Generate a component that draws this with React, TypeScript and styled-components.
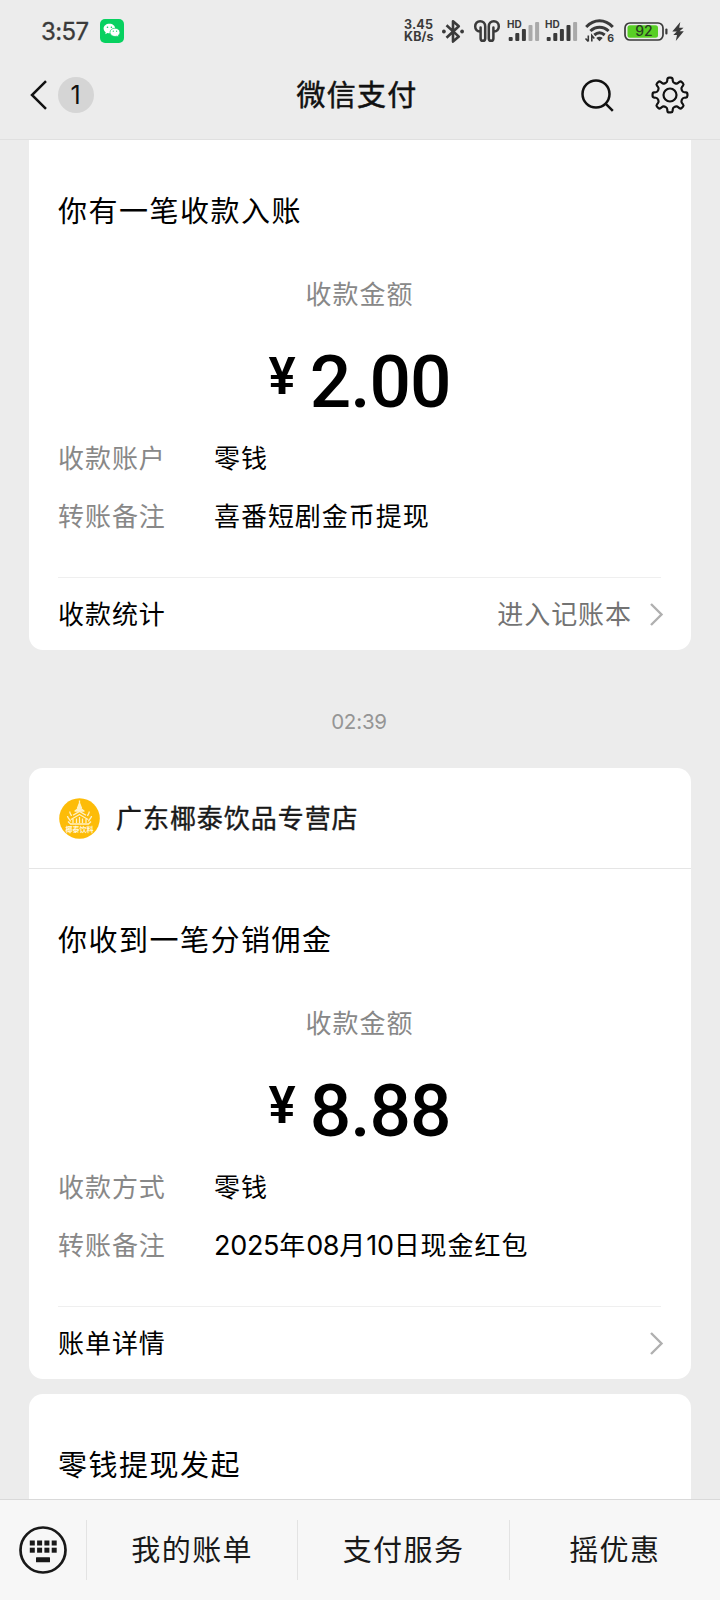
import React from "react";
import styled, { createGlobalStyle } from "styled-components";

const GlobalStyle = createGlobalStyle`
  * { box-sizing: border-box; }
  html, body { margin: 0; background: #ececec; }
  body { font-family: Inter, "Noto Sans CJK SC", sans-serif; color: #000; }
  svg { display: block; flex: none; overflow: visible; }
`;

const Screen = styled.div`
  width: 720px;
  height: 1600px;
  display: flex;
  flex-direction: column;
  overflow: hidden;
  background: #ececec;
`;

const StatusBar = styled.div`
  height: 62px;
  flex: none;
  display: flex;
  align-items: center;
  justify-content: space-between;
  padding: 0 36px 0 41px;
  color: #3a3a3a;
`;

const StatusGroup = styled.div`
  display: flex;
  align-items: center;
  gap: 12px;
`;

const StatusIcons = styled.div`
  display: grid;
  grid-template-columns: 38px 32px 33px 38px 40px 39px 48px 12px;
  align-items: center;
`;

const Clock = styled.span`
  width: 47px;
  white-space: nowrap;
  font-size: 24px;
  line-height: 30px;
  letter-spacing: -0.6px;
  padding-top: 1px;
  -webkit-text-stroke: 0.3px #3a3a3a;
`;

const NetSpeed = styled.div`
  display: flex;
  flex-direction: column;
  font-size: 12.5px;
  line-height: 12.4px;
  font-weight: 700;
  letter-spacing: 0.15px;
  white-space: nowrap;
`;

const NavBar = styled.header`
  height: 78px;
  flex: none;
  display: grid;
  grid-template-columns: 1fr auto 1fr;
  align-items: center;
  padding: 0 32px 11px 30px;
  border-bottom: 1px solid #e0e0e0;
`;

const NavSide = styled.div<{ $end?: boolean }>`
  display: flex;
  align-items: center;
  justify-content: ${(p) => (p.$end ? "flex-end" : "flex-start")};
  gap: ${(p) => (p.$end ? 38 : 11)}px;
`;

const UnreadBadge = styled.span`
  width: 36px;
  height: 36px;
  border-radius: 50%;
  background: #d5d5d5;
  display: flex;
  align-items: center;
  justify-content: center;
  padding-right: 1px;
  font-size: 25px;
  color: #111;
`;

const NavTitle = styled.h1`
  margin: 2px 0 0 -4px;
  font-size: 29px;
  line-height: 40px;
  letter-spacing: 1.3px;
  font-weight: 400;
  -webkit-text-stroke: 0.5px #111;
  color: #111;
`;

const Feed = styled.main`
  flex: 1;
  min-height: 0;
  overflow: hidden;
  padding: 0 29px;
`;

const Card = styled.section<{ $continued?: boolean; $gap?: number }>`
  background: #fff;
  border-radius: ${(p) => (p.$continued ? "0 0 14px 14px" : "14px")};
  margin-top: ${(p) => p.$gap ?? 0}px;
`;

const Merchant = styled.div`
  height: 101px;
  display: flex;
  align-items: center;
  gap: 16px;
  padding: 0 30px;
  border-bottom: 1px solid #e5e5e5;
`;

const MerchantName = styled.span`
  padding-top: 2px;
  font-size: 26px;
  line-height: 36px;
  letter-spacing: 0.95px;
  -webkit-text-stroke: 0.4px #191919;
  color: #191919;
`;

const Body = styled.div<{ $clipped?: boolean }>`
  padding: 52px 30px ${(p) => (p.$clipped ? 80 : 0)}px 29px;
`;

const Heading = styled.h2`
  margin: 0;
  font-size: 29px;
  line-height: 40px;
  letter-spacing: 1.5px;
  font-weight: 400;
`;

const AmountLabel = styled.div`
  margin-top: 45px;
  text-align: center;
  font-size: 26px;
  line-height: 36px;
  letter-spacing: 0.95px;
  color: #888;
`;

const Amount = styled.div`
  height: 114px;
  padding-top: 33px;
  display: flex;
  justify-content: center;
  align-items: flex-start;
  gap: 14px;
  font-family: Roboto, sans-serif;
  font-weight: 500;
`;

const Currency = styled.span`
  font-size: 51px;
  line-height: 61px;
  font-weight: 600;
`;

const Figure = styled.span`
  font-size: 73px;
  line-height: 72px;
  letter-spacing: -1px;
`;

const Details = styled.dl`
  margin: 0 0 34px;
`;

const DetailRow = styled.div`
  height: 58px;
  display: grid;
  grid-template-columns: 156px 1fr;
  align-items: center;
  font-size: 26px;
  letter-spacing: 0.95px;
`;

const DetailLabel = styled.dt`
  color: #888;
`;

const DetailValue = styled.dd`
  margin: 0;
`;

const Digits = styled.span`
  font-size: 27px;
  line-height: 1;
  letter-spacing: -0.3px;
`;

const FooterRow = styled.div`
  height: 73px;
  display: flex;
  align-items: center;
  border-top: 1px solid #efefef;
  font-size: 26px;
  letter-spacing: 0.95px;
`;

const FooterLabel = styled.span`
  padding-bottom: 4px;
`;

const FooterHint = styled.span`
  margin-left: auto;
  margin-right: 18px;
  padding-bottom: 4px;
  color: #737373;
`;

const ChevronSlot = styled.span<{ $push?: boolean }>`
  margin-left: ${(p) => (p.$push ? "auto" : "0")};
  margin-right: -2px;
`;

const Timestamp = styled.div`
  height: 118px;
  padding: 26px 2px 0 0;
  line-height: 92px;
  text-align: center;
  font-size: 20.5px;
  letter-spacing: -0.2px;
  color: #959595;
`;

const MenuBar = styled.nav`
  height: 101px;
  flex: none;
  display: flex;
  align-items: center;
  border-top: 1px solid #d9d9d9;
  background: #f7f7f7;
`;

const KeyboardButton = styled.div`
  width: 86px;
  flex: none;
  display: flex;
  padding-left: 19px;
`;

const MenuItem = styled.div`
  flex: 1;
  height: 60px;
  display: flex;
  align-items: center;
  justify-content: center;
  padding-bottom: 5px;
  border-left: 1px solid #e3e3e3;
  font-size: 29px;
  letter-spacing: 1.4px;
  color: #191919;
`;

const MessagesIcon = () => (
  <svg width="24" height="24" viewBox="0 0 24 24">
    <rect width="24" height="24" rx="5" fill="#07d160" />
    <path d="M9.4 4.8c-3.3 0-5.8 2.1-5.8 4.8 0 1.5.8 2.8 2.1 3.7l-.4 1.9 2.1-1.1c3.9 1 7.8-1 7.8-4.5 0-2.7-2.5-4.8-5.8-4.8z" fill="#fff" />
    <path d="M15 9.2c-2.9 0-5 1.8-5 4.1s2.1 4.2 5 4.2c.6 0 1.2-.1 1.8-.3l1.7.9-.4-1.5c1.1-.8 1.8-1.9 1.8-3.3 0-2.3-2.1-4.1-4.9-4.1z" fill="#fff" stroke="#07d160" strokeWidth=".7" />
    <g fill="#07d160">
      <circle cx="7.5" cy="8.2" r=".8" />
      <circle cx="11.4" cy="8.2" r=".8" />
      <circle cx="13.3" cy="12.2" r=".6" />
      <circle cx="16.6" cy="12.2" r=".6" />
    </g>
  </svg>
);

const BluetoothIcon = () => (
  <svg width="22" height="25" viewBox="0 0 22 25" fill="none" stroke="#3a3a3a" strokeWidth="2.6">
    <path d="M4.5 6.3 16.8 17.6 11 22.6V2.2l5.8 5L4.5 18.7" strokeLinejoin="round" />
    <circle cx="1.9" cy="12.5" r="1.9" fill="#3a3a3a" stroke="none" />
    <circle cx="20.1" cy="12.5" r="1.9" fill="#3a3a3a" stroke="none" />
  </svg>
);

const EarbudsIcon = () => (
  <svg width="26" height="22" viewBox="0 0 26 22" fill="none" stroke="#3a3a3a" strokeWidth="2.5" strokeLinejoin="round" strokeLinecap="round">
    <path d="M6.6 11.4C3 11.8 1.2 9.2 1.2 6.4 1.2 3.3 3.3 1.2 6.2 1.2s5 2 5 5.2v12c0 1.5-1 2.4-2.3 2.4s-2.3-.9-2.3-2.4V7.4" />
    <path d="M19.4 11.4c3.6.4 5.4-2.2 5.4-5 0-3.1-2.1-5.2-5-5.2s-5 2-5 5.2v12c0 1.5 1 2.4 2.3 2.4s2.3-.9 2.3-2.4V7.4" />
  </svg>
);

const SignalIcon = ({ level }: { level: number }) => (
  <svg width="32" height="22" viewBox="0 0 32 22">
    <text x="0" y="8.2" fontSize="10" fontWeight="700" fill="#3a3a3a" fontFamily="Inter, sans-serif">HD</text>
    {[4, 8, 12, 16, 19].map((h, i) => (
      <rect key={i} x={1.7 + i * 6.6} y={21 - h} width="4" height={h} rx="1" fill={i < level ? "#3a3a3a" : "#a9a9a9"} />
    ))}
  </svg>
);

const WifiIcon = () => (
  <svg width="30" height="24" viewBox="0 0 30 24" fill="none" stroke="#3a3a3a" strokeWidth="3">
    <path d="M1.2 8C9-.2 20-.2 27.800 8" />
    <path d="M5.4 12c5.400-5 12.800-5 18.200 0" />
    <path d="M9.3 16c3.200-2.700 7.200-2.700 10.400 0" />
    <path d="M11.3 19c1.900-1.600 4.500-1.600 6.400 0l-3.200 3.300z" fill="#3a3a3a" stroke="none" />
    <path d="M3.3 16.500v6M.5 19.500l2.800 3M6.800 22.500v-6l2.500 3" strokeWidth="1.6" />
    <text x="22.3" y="23.300" fontSize="10.500" fontWeight="700" fill="#3a3a3a" stroke="none" fontFamily="Inter, sans-serif">6</text>
  </svg>
);

const BatteryIcon = () => (
  <svg width="44" height="19" viewBox="0 0 44 19">
    <rect x="1" y="1" width="38" height="17" rx="5" fill="#ececec" stroke="#3a3a3a" strokeWidth="1.7" />
    <rect x="3.5" y="3.3" width="30.5" height="12.4" rx="2.5" fill="#58cf25" />
    <rect x="41.3" y="6.5" width="2.2" height="6" rx="1" fill="#3a3a3a" />
    <text x="20" y="14.3" textAnchor="middle" fontSize="14" fontWeight="500" fill="#293b22" fontFamily="Inter, sans-serif">92</text>
  </svg>
);

const BoltIcon = () => (
  <svg width="12" height="19" viewBox="0 0 12 19" fill="#3a3a3a">
    <path d="M8.3 0 .3 9.6h4.500L1.300 13.100h3.700L3.800 19l8-9.700H7.600l3.900-3.500H7.200z" />
  </svg>
);

const BackIcon = () => (
  <svg width="17" height="30" viewBox="0 0 17 30" fill="none" stroke="#111" strokeWidth="2.5">
    <path d="M16 1.2 2 15l14 13.800" />
  </svg>
);

const SearchIcon = () => (
  <svg width="33" height="33" viewBox="0 0 33 33" fill="none" stroke="#111" strokeWidth="2.5">
    <circle cx="15" cy="15" r="13.5" />
    <path d="m24.300 24.300 7.500 7.500" />
  </svg>
);

// Eight-tooth outline with every corner softened by a quadratic curve.
const gearOutline = (() => {
  const points: [number, number][] = [];
  for (let i = 0; i < 8; i++) {
    const axis = -90 + i * 45;
    [[-13, 13], [-8, 17.6], [8, 17.6], [13, 13]].forEach(([offset, radius]) => {
      const a = ((axis + offset) * Math.PI) / 180;
      points.push([18 + radius * Math.cos(a), 18 + radius * Math.sin(a)]);
    });
  }
  const toward = (a: [number, number], b: [number, number]) => {
    const t = Math.min(0.45, 1.6 / Math.hypot(b[0] - a[0], b[1] - a[1]));
    return `${a[0] + (b[0] - a[0]) * t} ${a[1] + (b[1] - a[1]) * t}`;
  };
  return (
    points
      .map((p, i) => {
        const prev = points[(i + points.length - 1) % points.length];
        const next = points[(i + 1) % points.length];
        return `${i ? "L" : "M"}${toward(p, prev)}Q${p[0]} ${p[1]} ${toward(p, next)}`;
      })
      .join("") + "Z"
  );
})();

const GearIcon = () => (
  <svg width="36" height="36" viewBox="0 0 36 36" fill="none" stroke="#111" strokeWidth="2.2" strokeLinejoin="round">
    <path d={gearOutline} />
    <circle cx="18" cy="18" r="6.5" />
  </svg>
);

const ChevronIcon = () => (
  <svg width="13" height="23" viewBox="0 0 13 23" fill="none" stroke="#b0b0b0" strokeWidth="2.4">
    <path d="M1 1l10.500 10.500L1 22" />
  </svg>
);

const ShopLogo = () => (
  <svg width="41" height="41" viewBox="0 0 41 41">
    <circle cx="20.5" cy="20.5" r="20.3" fill="#fdbc08" />
    <g fill="none" stroke="#fff1c4" strokeWidth="1.3" strokeLinejoin="round">
      <path d="M20.500 2.500v6M20.500 5l-2 5h4zM16 13l4.500-3.500L25 13z" fill="#fff1c4" />
      <path d="M14 17.200l6.500-3.800 6.500 3.800M12 21.500l8.500-5 8.500 5M14 25v-4M17.500 25v-4.500M20.500 25v-6M23.500 25v-4.500M27 25v-4" />
      <path d="M11 13.500c-.8 2 1 2.500 1.500 4.500M30 13.500c.8 2-1 2.500-1.500 4.500M8.500 18c0 2.500 2.500 2.800 3 5.500M32.500 18c0 2.500-2.500 2.800-3 5.500M9 23.500l2.500 2.500h18l2.500-2.500" />
    </g>
    <text x="20.5" y="34.3" textAnchor="middle" fontSize="7" fontWeight="700" fill="#fff6d8" fontFamily="Noto Sans CJK SC, sans-serif">椰泰饮料</text>
  </svg>
);

const KeyboardIcon = () => (
  <svg width="48" height="48" viewBox="0 0 48 48">
    <circle cx="24" cy="24" r="22.5" fill="none" stroke="#191919" strokeWidth="2.7" />
    <g fill="#191919">
      {[0, 1, 2, 3].map((i) => (
        <React.Fragment key={i}>
          <rect x={10.8 + i * 7.3} y="14.5" width="5" height="5" />
          <rect x={10.8 + i * 7.3} y="21.7" width="5" height="5" />
        </React.Fragment>
      ))}
      <rect x="17" y="31.3" width="14" height="5" rx=".5" />
    </g>
  </svg>
);

const withDigits = (text: string) =>
  text.split(/(\d+)/).map((part, i) => (/^\d+$/.test(part) ? <Digits key={i}>{part}</Digits> : part));

type ReceiptProps = {
  heading: string;
  amount: string;
  details: [string, string][];
  action: string;
  hint?: string;
};

const Receipt = ({ heading, amount, details, action, hint }: ReceiptProps) => (
  <Body>
    <Heading>{heading}</Heading>
    <AmountLabel>收款金额</AmountLabel>
    <Amount>
      <Currency>¥</Currency>
      <Figure>{amount}</Figure>
    </Amount>
    <Details>
      {details.map(([label, value]) => (
        <DetailRow key={label}>
          <DetailLabel>{label}</DetailLabel>
          <DetailValue>{withDigits(value)}</DetailValue>
        </DetailRow>
      ))}
    </Details>
    <FooterRow>
      <FooterLabel>{action}</FooterLabel>
      {hint && <FooterHint>{hint}</FooterHint>}
      <ChevronSlot $push={!hint}>
        <ChevronIcon />
      </ChevronSlot>
    </FooterRow>
  </Body>
);

export default function App() {
  return (
    <Screen>
      <GlobalStyle />
      <StatusBar>
        <StatusGroup>
          <Clock>3:57</Clock>
          <MessagesIcon />
        </StatusGroup>
        <StatusIcons>
          <NetSpeed>
            <span>3.45</span>
            <span>KB/s</span>
          </NetSpeed>
          <BluetoothIcon />
          <EarbudsIcon />
          <SignalIcon level={3} />
          <SignalIcon level={4} />
          <WifiIcon />
          <BatteryIcon />
          <BoltIcon />
        </StatusIcons>
      </StatusBar>
      <NavBar>
        <NavSide>
          <BackIcon />
          <UnreadBadge>1</UnreadBadge>
        </NavSide>
        <NavTitle>微信支付</NavTitle>
        <NavSide $end>
          <SearchIcon />
          <GearIcon />
        </NavSide>
      </NavBar>
      <Feed>
        <Card $continued>
          <Receipt
            heading="你有一笔收款入账"
            amount="2.00"
            details={[
              ["收款账户", "零钱"],
              ["转账备注", "喜番短剧金币提现"],
            ]}
            action="收款统计"
            hint="进入记账本"
          />
        </Card>
        <Timestamp>02:39</Timestamp>
        <Card>
          <Merchant>
            <ShopLogo />
            <MerchantName>广东椰泰饮品专营店</MerchantName>
          </Merchant>
          <Receipt
            heading="你收到一笔分销佣金"
            amount="8.88"
            details={[
              ["收款方式", "零钱"],
              ["转账备注", "2025年08月10日现金红包"],
            ]}
            action="账单详情"
          />
        </Card>
        <Card $gap={15}>
          <Body $clipped>
            <Heading>零钱提现发起</Heading>
          </Body>
        </Card>
      </Feed>
      <MenuBar>
        <KeyboardButton>
          <KeyboardIcon />
        </KeyboardButton>
        <MenuItem>我的账单</MenuItem>
        <MenuItem>支付服务</MenuItem>
        <MenuItem>摇优惠</MenuItem>
      </MenuBar>
    </Screen>
  );
}
